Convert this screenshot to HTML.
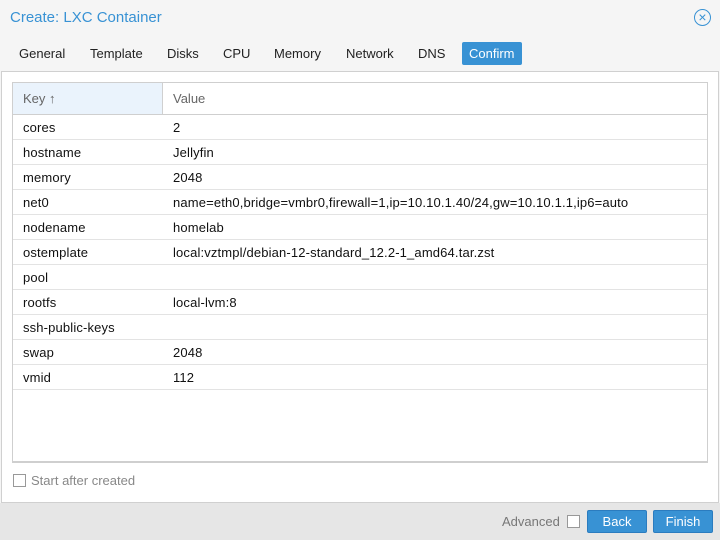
<!DOCTYPE html>
<html><head><style>
*{box-sizing:border-box;margin:0;padding:0}
body{width:720px;height:540px;background:#f5f5f5;font-family:"Liberation Sans",sans-serif;font-size:13px;color:#000;position:relative;overflow:hidden}
.title{position:absolute;left:10px;top:9px;font-size:15px;color:#3892d4}
.close{position:absolute;left:694px;top:9px;width:17px;height:17px;border:1px solid #3892d4;border-radius:50%;color:#3892d4;font-size:14px;line-height:14px;text-align:center}
.tab{position:absolute;top:46px;font-size:13px;color:#222}
.tab.act{background:#3892d4;color:#fff;top:42px;height:23px;line-height:23px;padding:0 7px;border-radius:2px;width:60px}
.body{position:absolute;left:1px;top:71px;width:718px;height:432px;background:#fff;border:1px solid #d0d0d0}
.grid{position:absolute;left:12px;top:82px;width:696px;height:381px;border:1px solid #cfcfcf;border-bottom:2px solid #cfcfcf}
.hdr{height:32px;border-bottom:1px solid #cfcfcf;position:relative;color:#666}
.hk{position:absolute;left:0;top:0;width:150px;height:31px;background:#eaf3fc;border-right:1px solid #d0d0d0;padding:8px 10px}
.hv{position:absolute;left:160px;top:8px}
.row{height:25px;border-bottom:1px solid #e3e3e3;position:relative;line-height:25px;color:#111;letter-spacing:0.15px}
.row span{position:absolute;left:10px}
.row b{position:absolute;left:160px;font-weight:normal}
.cb{position:absolute;width:13px;height:13px;border:1px solid #999;background:#fff}
.foot{position:absolute;left:0;top:503px;width:720px;height:37px;background:#e6e6e6}
.btn{position:absolute;top:510px;width:60px;height:23px;background:#3892d4;border:1px solid #2b7cbf;border-radius:2px;color:#fff;text-align:center;line-height:21px}
</style></head><body>
<div class="title">Create: LXC Container</div>
<div class="close">×</div>
<div class="tab" style="left:19px">General</div>
<div class="tab" style="left:90px">Template</div>
<div class="tab" style="left:167px">Disks</div>
<div class="tab" style="left:223px">CPU</div>
<div class="tab" style="left:274px">Memory</div>
<div class="tab" style="left:346px">Network</div>
<div class="tab" style="left:418px">DNS</div>
<div class="tab act" style="left:462px">Confirm</div>
<div class="body"></div>
<div class="grid">
<div class="hdr"><div class="hk">Key ↑</div><div class="hv">Value</div></div>
<div class="row"><span>cores</span><b>2</b></div>
<div class="row"><span>hostname</span><b>Jellyfin</b></div>
<div class="row"><span>memory</span><b>2048</b></div>
<div class="row"><span>net0</span><b>name=eth0,bridge=vmbr0,firewall=1,ip=10.10.1.40/24,gw=10.10.1.1,ip6=auto</b></div>
<div class="row"><span>nodename</span><b>homelab</b></div>
<div class="row"><span>ostemplate</span><b>local:vztmpl/debian-12-standard_12.2-1_amd64.tar.zst</b></div>
<div class="row"><span>pool</span><b></b></div>
<div class="row"><span>rootfs</span><b>local-lvm:8</b></div>
<div class="row"><span>ssh-public-keys</span><b></b></div>
<div class="row"><span>swap</span><b>2048</b></div>
<div class="row"><span>vmid</span><b>112</b></div>
</div>
<div class="cb" style="left:13px;top:474px"></div>
<div style="position:absolute;left:31px;top:473px;color:#888">Start after created</div>
<div class="foot"></div>
<div style="position:absolute;left:502px;top:514px;color:#777">Advanced</div>
<div class="cb" style="left:567px;top:515px"></div>
<div class="btn" style="left:587px">Back</div>
<div class="btn" style="left:653px">Finish</div>
</body></html>
